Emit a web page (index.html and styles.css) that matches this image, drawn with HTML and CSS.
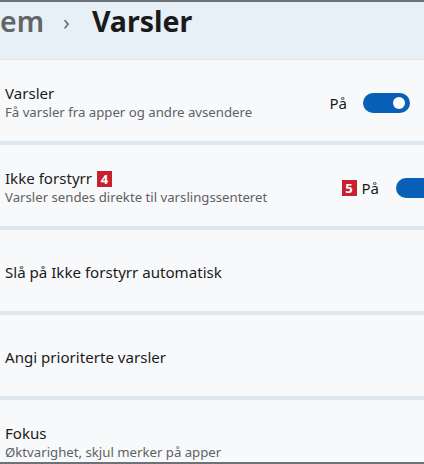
FILE: index.html
```html
<!DOCTYPE html>
<html lang="nb">
<head>
<meta charset="utf-8">
<link rel="stylesheet" href="styles.css">
</head>
<body>
<div class="frame">
  <header class="crumbs">
    <span class="crumb-parent">em</span>
    <span class="crumb-sep">›</span>
    <span class="crumb-current">Varsler</span>
  </header>
  <main class="list">
    <section class="card">
      <div class="text">
        <div class="title">Varsler</div>
        <div class="sub">Få varsler fra apper og andre avsendere</div>
      </div>
      <div class="control">
        <span class="state">På</span>
        <span class="toggle"><span class="thumb"></span></span>
      </div>
    </section>
    <section class="card">
      <div class="text">
        <div class="title">Ikke forstyrr <span class="badge">4</span></div>
        <div class="sub">Varsler sendes direkte til varslingssenteret</div>
      </div>
      <div class="control control-cut">
        <span class="badge">5</span>
        <span class="state">På</span>
        <span class="toggle"><span class="thumb"></span></span>
      </div>
    </section>
    <section class="card">
      <div class="text">
        <div class="title">Slå på Ikke forstyrr automatisk</div>
      </div>
    </section>
    <section class="card">
      <div class="text">
        <div class="title">Angi prioriterte varsler</div>
      </div>
    </section>
    <section class="card">
      <div class="text">
        <div class="title">Fokus</div>
        <div class="sub">Øktvarighet, skjul merker på apper</div>
      </div>
    </section>
  </main>
</div>
</body>
</html>
```
FILE: styles.css
```css
* { box-sizing: border-box; }
html, body { margin: 0; padding: 0; }
body {
  width: 424px;
  height: 464px;
  overflow: hidden;
  background: #dfe7ee;
  font-family: "Noto Sans", "Open Sans", sans-serif;
  color: #1b1b1b;
}
.frame {
  width: 424px;
  height: 464px;
  overflow: hidden;
  border-top: 2px solid #6d7178;
  border-bottom: 2px solid #6d7178;
  display: flex;
  flex-direction: column;
}
.crumbs {
  height: 58px;
  flex: none;
  background: #e7eff7;
  border-bottom: 1px solid #dce6ee;
  display: flex;
  align-items: flex-start;
  white-space: nowrap;
  line-height: 38px;
}
.crumb-parent {
  font-size: 28.5px;
  font-weight: 600;
  color: #626466;
}
.crumb-sep {
  font-size: 22px;
  color: #6a6c6e;
  margin-left: 19px;
  margin-right: 22px;
}
.crumb-current {
  font-size: 28.5px;
  font-weight: 700;
  color: #1a1a1a;
}
.list {
  display: flex;
  flex-direction: column;
  gap: 4px;
  flex: 1;
  overflow: hidden;
}
.card {
  height: 81px;
  flex: none;
  background: #f8f9fb;
  display: flex;
  align-items: center;
  justify-content: space-between;
  padding-left: 5px;
  white-space: nowrap;
}
.text { display: flex; flex-direction: column; padding-top: 4px; }
.title {
  font-size: 15.1px;
  line-height: 19px;
  color: #1b1b1b;
  display: flex;
  align-items: center;
  gap: 5px;
}
.sub {
  font-size: 13.2px;
  line-height: 18px;
  color: #5e6164;
}
.badge {
  display: inline-flex;
  align-items: center;
  justify-content: center;
  width: 15px;
  height: 16px;
  background: #c8202f;
  color: #fff;
  font-weight: 700;
  font-size: 13px;
  line-height: 16px;
}
.control {
  display: flex;
  align-items: center;
  gap: 16px;
  padding-right: 14px;
  padding-top: 4px;
}
.control-cut {
  gap: 5px;
  padding-right: 0;
  margin-right: -19px;
}
.control-cut .toggle { margin-left: 12px; }
.state { font-size: 15px; color: #1b1b1b; }
.toggle {
  width: 47px;
  height: 20px;
  border-radius: 10px;
  background: #0a60b6;
  display: flex;
  align-items: center;
  justify-content: flex-end;
  padding-right: 5px;
}
.thumb {
  width: 12px;
  height: 12px;
  border-radius: 50%;
  background: #fff;
}
```
